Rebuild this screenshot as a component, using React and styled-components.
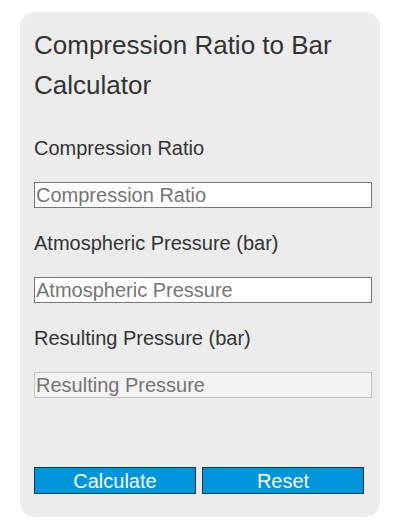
import styled, { createGlobalStyle } from "styled-components";

const GlobalStyle = createGlobalStyle`
  body {
    margin: 0;
    background: #ffffff;
    font-family: "Liberation Sans", Arial, sans-serif;
  }
`;

const fields = [
  { label: "Compression Ratio", placeholder: "Compression Ratio" },
  { label: "Atmospheric Pressure (bar)", placeholder: "Atmospheric Pressure" },
  { label: "Resulting Pressure (bar)", placeholder: "Resulting Pressure", readOnly: true },
];

const App = () => {
  return (
    <Page>
      <GlobalStyle />
      <Card>
        <Title>Compression Ratio to Bar Calculator</Title>
        {fields.map((f, i) => (
          <Field key={f.label} $last={i === fields.length - 1}>
            <Label>{f.label}</Label>
            <Input placeholder={f.placeholder} disabled={f.readOnly} />
          </Field>
        ))}
        <Buttons>
          <Button>Calculate</Button>
          <Button>Reset</Button>
        </Buttons>
      </Card>
    </Page>
  );
};

// outer page, puts the card at its offset
const Page = styled.div`
  padding: 12px 0 0 20px;
`;

const Card = styled.div`
  box-sizing: border-box;
  width: 360px;
  padding: 13px 8px 23px 14px;
  background: #ececec;
  border-radius: 15px;
  color: #333333;
`;

const Title = styled.h2`
  margin: 0 0 32px;
  font-size: 26px;
  font-weight: normal;
  line-height: 40px;
`;

const Field = styled.div`
  display: flex;
  flex-direction: column;
  margin-bottom: ${(p) => (p.$last ? "69px" : "24px")};
`;

const Label = styled.label`
  font-size: 20px;
  line-height: 23px;
  margin-bottom: 22px;
`;

const Input = styled.input`
  box-sizing: border-box;
  width: 338px;
  height: 26px;
  margin: 0;
  padding: 0 1px;
  font-family: "Liberation Sans", Arial, sans-serif;
  font-size: 20px;
  color: #333333;
  background: #ffffff;
  border: 1px solid #767676;
  border-radius: 0;
  outline: none;

  &::placeholder {
    color: #757575;
  }

  &:disabled {
    background: #f3f3f3;
    border-color: #c4c4c4;
  }
`;

const Buttons = styled.div`
  display: flex;
  gap: 6px;
`;

const Button = styled.button`
  box-sizing: border-box;
  width: 162px;
  height: 27px;
  padding: 0;
  font-family: "Liberation Sans", Arial, sans-serif;
  font-size: 20px;
  line-height: 1;
  color: #ffffff;
  background: #0095da;
  border: 1px solid #1d3446;
  border-radius: 0;
  cursor: pointer;
`;

export default App;
